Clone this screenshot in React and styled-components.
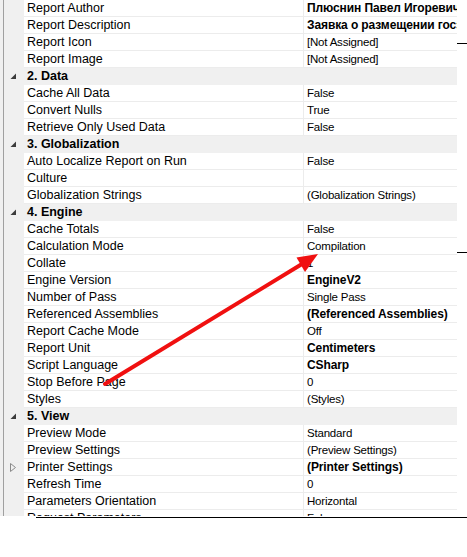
import React from "react";
import styled, { createGlobalStyle } from "styled-components";

const GlobalStyle = createGlobalStyle`
  html, body {
    margin: 0;
    padding: 0;
    background: #ffffff;
  }
  body {
    font-family: "Liberation Sans", Arial, sans-serif;
    color: #000000;
  }
`;

const rows = [
  { name: "Report Author", value: "Плюснин Павел Игоревич", bold: true },
  { name: "Report Description", value: "Заявка о размещении госзаказа", bold: true },
  { name: "Report Icon", value: "[Not Assigned]" },
  { name: "Report Image", value: "[Not Assigned]" },
  { category: "2. Data" },
  { name: "Cache All Data", value: "False" },
  { name: "Convert Nulls", value: "True" },
  { name: "Retrieve Only Used Data", value: "False" },
  { category: "3. Globalization" },
  { name: "Auto Localize Report on Run", value: "False" },
  { name: "Culture", value: "" },
  { name: "Globalization Strings", value: "(Globalization Strings)" },
  { category: "4. Engine" },
  { name: "Cache Totals", value: "False" },
  { name: "Calculation Mode", value: "Compilation" },
  { name: "Collate", value: "1" },
  { name: "Engine Version", value: "EngineV2", bold: true },
  { name: "Number of Pass", value: "Single Pass" },
  { name: "Referenced Assemblies", value: "(Referenced Assemblies)", bold: true },
  { name: "Report Cache Mode", value: "Off" },
  { name: "Report Unit", value: "Centimeters", bold: true },
  { name: "Script Language", value: "CSharp", bold: true },
  { name: "Stop Before Page", value: "0" },
  { name: "Styles", value: "(Styles)" },
  { category: "5. View" },
  { name: "Preview Mode", value: "Standard" },
  { name: "Preview Settings", value: "(Preview Settings)" },
  { name: "Printer Settings", value: "(Printer Settings)", bold: true, expandable: true },
  { name: "Refresh Time", value: "0" },
  { name: "Parameters Orientation", value: "Horizontal" },
  { name: "Request Parameters", value: "False" },
];

const Page = styled.div`
  position: relative;
  width: 467px;
  height: 557px;
  overflow: hidden;
`;

const Panel = styled.div`
  width: 457px;
  height: 516px;
  overflow: hidden;
  background: #f0f0f0;
  padding-left: 3px;
  box-sizing: border-box;
`;

const List = styled.div`
  border-left: 1px solid #a0a0a0;
  display: flex;
  flex-direction: column;
`;

const Row = styled.div`
  display: grid;
  grid-template-columns: 20px 279px 1px 153px;
  height: 17px;
  flex-shrink: 0;
  background: ${(p) => (p.$category ? "#f0f0f0" : "#ffffff")};
`;

const Gutter = styled.div`
  background: #f0f0f0;
  display: flex;
  align-items: center;
  justify-content: center;
  padding-right: 2px;
`;

const Name = styled.div`
  grid-column: ${(p) => (p.$category ? "2 / 5" : "auto")};
  padding-left: 3px;
  font-size: 12.5px;
  line-height: 16px;
  font-weight: ${(p) => (p.$category ? 700 : 400)};
  border-bottom: 1px solid ${(p) => (p.$category ? "#f0f0f0" : "#ececec")};
  white-space: nowrap;
  overflow: hidden;
`;

const Divider = styled.div`
  background: #ececec;
`;

const Value = styled.div`
  padding-left: 3px;
  font-size: ${(p) => (p.$bold ? "12px" : "11.5px")};
  font-weight: ${(p) => (p.$bold ? 700 : 400)};
  line-height: 16px;
  letter-spacing: ${(p) => (p.$bold ? "-0.1px" : "-0.2px")};
  border-bottom: 1px solid #ececec;
  white-space: nowrap;
  overflow: hidden;
`;

const BottomLine = styled.div`
  margin-top: 1px;
  margin-left: 36px;
  height: 1px;
  background: #000000;
`;

const Overlay = styled.svg`
  position: absolute;
  top: 0;
  left: 0;
  pointer-events: none;
`;

const Collapse = () => (
  <svg width="7" height="7" viewBox="0 0 7 7">
    <polygon points="6,0.5 6,6 0.5,6" fill="#3c3c3c" />
  </svg>
);

const Expand = () => (
  <svg width="6" height="9" viewBox="0 0 6 9">
    <polygon points="0.5,0.5 5.5,4.5 0.5,8.5" fill="none" stroke="#8a8a8a" strokeWidth="1" />
  </svg>
);

const App = () => {
  return (
    <>
      <GlobalStyle />
      <Page>
        <Panel>
          <List>
            {rows.map((r, i) =>
              r.category ? (
                <Row key={i} $category>
                  <Gutter>
                    <Collapse />
                  </Gutter>
                  <Name $category>{r.category}</Name>
                </Row>
              ) : (
                <Row key={i}>
                  <Gutter>{r.expandable && <Expand />}</Gutter>
                  <Name>{r.name}</Name>
                  <Divider />
                  <Value $bold={r.bold}>{r.value}</Value>
                </Row>
              )
            )}
          </List>
        </Panel>
        <BottomLine />
        <Overlay width="467" height="557" viewBox="0 0 467 557">
          <line x1="457" y1="43.5" x2="467" y2="43.5" stroke="#000" strokeWidth="1" />
          <line x1="457" y1="252.5" x2="467" y2="252.5" stroke="#000" strokeWidth="1" />
          <line x1="105" y1="384" x2="302" y2="264" stroke="#f01010" strokeWidth="4" strokeLinecap="round" />
          <polygon points="318,254 305,272 296.5,257.5" fill="#f01010" />
        </Overlay>
      </Page>
    </>
  );
};

export default App;
